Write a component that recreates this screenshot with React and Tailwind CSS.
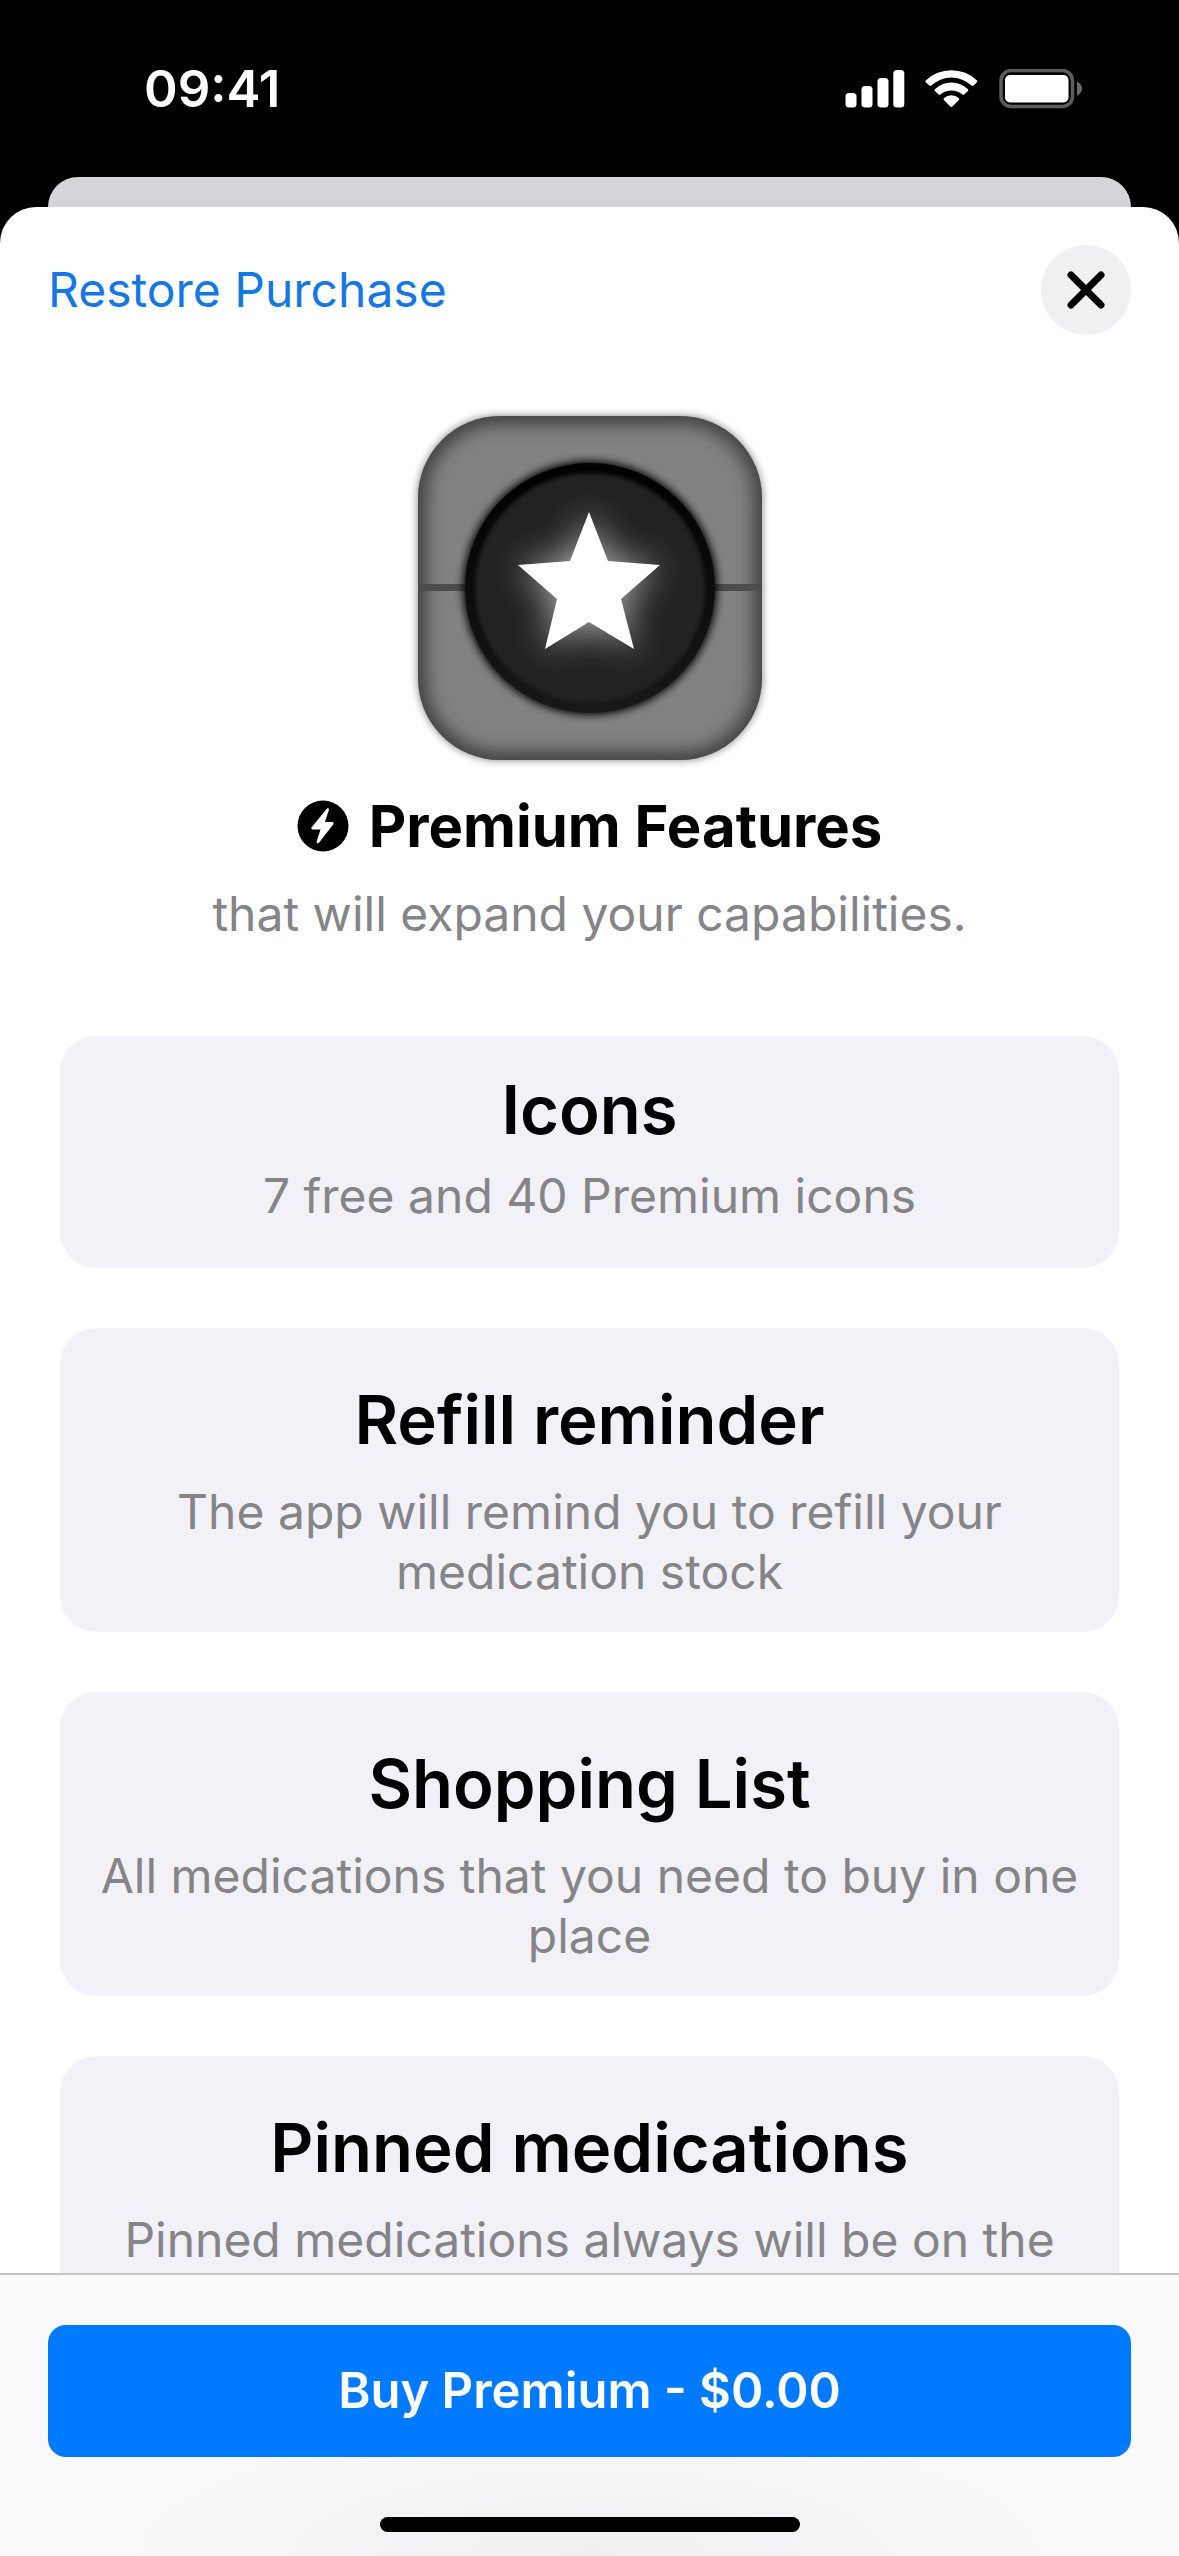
import React from 'react';
import clsx from 'clsx';

const features = [
  { title: 'Icons', text: '7 free and 40 Premium icons', compact: true },
  { title: 'Refill reminder', text: 'The app will remind you to refill your medication stock' },
  { title: 'Shopping List', text: 'All medications that you need to buy in one place' },
  { title: 'Pinned medications', text: 'Pinned medications always will be on the' },
];

function StatusBar() {
  return (
    <div className="flex h-[177px] shrink-0 items-center justify-between pl-36 pr-24">
      <span className="text-[51px] leading-[60px] font-semibold text-white">09:41</span>
      <svg width="238" height="40" viewBox="845 68 238 40" fill="#fff" aria-hidden="true">
        {/* Signal */}
        <rect x="845.5" y="92" width="11" height="14.5" rx="3.5" />
        <rect x="861.5" y="85" width="11" height="21.5" rx="3.5" />
        <rect x="877.5" y="77" width="11" height="29.5" rx="3.5" />
        <rect x="893.3" y="69" width="11" height="37.5" rx="3.5" />
        {/* Wifi */}
        <path d="M925.8 79.4 Q925 80.3 925.8 81.2 L929.4 84.6 Q930.3 85.4 931.2 84.6 A29.5 29.5 0 0 1 971.6 84.6 Q972.5 85.4 973.4 84.6 L977 81.2 Q977.8 80.3 977 79.4 A37.3 37.3 0 0 0 925.8 79.4Z" />
        <path d="M934.8 88.2 Q934 89.1 934.8 90 L938.6 93.6 Q939.5 94.4 940.4 93.6 A16.5 16.5 0 0 1 962.4 93.6 Q963.3 94.4 964.2 93.6 L968 90 Q968.8 89.1 968 88.2 A24.2 24.2 0 0 0 934.8 88.2Z" />
        <path d="M943.8 97.2 Q943 98.1 943.9 99 L950.4 105.6 Q951.4 106.6 952.4 105.6 L958.9 99 Q959.8 98.1 959 97.2 A11.5 11.5 0 0 0 943.8 97.2Z" />
        {/* Battery */}
        <rect x="1001" y="69.5" width="71.5" height="36" rx="10" fill="none" stroke="#5c5c5c" strokeWidth="3.5" />
        <rect x="1005" y="74" width="63.5" height="27.5" rx="5" />
        <path d="M1077 80.5 Q1082 83 1082 87.5 T1077 94.5Z" fill="#6a6a6a" />
      </svg>
    </div>
  );
}

function AppIcon() {
  return (
    <svg className="mx-auto mt-[51px]" width="404" height="404" viewBox="-30 -30 404 404" role="img" aria-label="App icon">
      <defs>
        <clipPath id="tile">
          <rect width="344" height="344" rx="82" />
        </clipPath>
        <filter id="soft" x="-20%" y="-20%" width="140%" height="140%">
          <feGaussianBlur stdDeviation="4" />
        </filter>
        <filter id="edge" x="-20%" y="-20%" width="140%" height="140%">
          <feGaussianBlur stdDeviation="9" />
        </filter>
        <filter id="rimblur" x="-20%" y="-20%" width="140%" height="140%">
          <feGaussianBlur stdDeviation="2" />
        </filter>
        <filter id="glow" x="-60%" y="-60%" width="220%" height="220%">
          <feGaussianBlur stdDeviation="18" />
        </filter>
        <linearGradient id="rim" x1="0" y1="0" x2="0" y2="1">
          <stop offset="0" stopColor="#000" />
          <stop offset="1" stopColor="#181818" />
        </linearGradient>
        <clipPath id="dial">
          <circle cx="172" cy="172" r="124" />
        </clipPath>
      </defs>
      <rect width="344" height="344" rx="82" fill="#000" opacity="0.5" filter="url(#soft)" />
      <g clipPath="url(#tile)">
        <rect width="344" height="344" fill="#828282" />
        <rect x="-4" y="-4" width="352" height="352" rx="86" fill="none" stroke="#3c3c3c" strokeWidth="24" filter="url(#edge)" />
        <rect y="168" width="344" height="7" fill="#4c4c4c" />
      </g>
      <circle cx="172" cy="172" r="127" fill="#000" filter="url(#soft)" />
      <circle cx="172" cy="172" r="125" fill="url(#rim)" />
      <circle cx="172" cy="172" r="115" fill="#212121" filter="url(#rimblur)" />
      <g clipPath="url(#dial)">
        <path d="M171 96 190 145 242 149 203 183 216 233 171 206 127 233 139 183 100 149 152 145Z" fill="#fff" opacity="0.65" filter="url(#glow)" />
      </g>
      <path d="M171 96 190 145 242 149 203 183 216 233 171 206 127 233 139 183 100 149 152 145Z" fill="#fff" />
    </svg>
  );
}

function FeatureCard({ title, text, compact }) {
  return (
    <li
      className={clsx(
        'flex flex-col rounded-[36px] bg-[#f2f1f7] px-9 text-center',
        compact ? 'gap-3.5 pt-8 pb-[42px]' : 'min-h-[304px] gap-5 pt-[50px] pb-[30px]'
      )}
    >
      <h2 className="text-[67px] leading-[84px] font-semibold text-black">{title}</h2>
      <p className="text-[48px] leading-[60px] text-[#858489]">{text}</p>
    </li>
  );
}

export default function App() {
  return (
    <div className="flex h-screen flex-col overflow-hidden bg-black font-['Inter',sans-serif]">
      <StatusBar />

      {/* Sheet underneath */}
      <div className="mx-12 h-[30px] shrink-0 rounded-t-[30px] bg-[#d5d4d9]" />

      <div className="flex min-h-0 flex-1 flex-col rounded-t-[36px] bg-white">
        <header className="flex shrink-0 items-center justify-between px-12 pt-[38px]">
          <button type="button" className="text-[48px] leading-[60px] text-[#1477e4]">
            Restore Purchase
          </button>
          <button type="button" aria-label="Close" className="flex size-[90px] items-center justify-center rounded-full bg-[#f0f0f2]">
            <svg width="38" height="38" viewBox="0 0 38 38" stroke="#000" strokeWidth="7" strokeLinecap="round">
              <path d="M4 4 34 34M34 4 4 34" />
            </svg>
          </button>
        </header>

        <main className="min-h-0 flex-1 overflow-y-auto [scrollbar-width:none]">
          <AppIcon />
          <div className="flex items-center justify-center gap-5">
            <svg width="52" height="52" viewBox="0 0 52 52" aria-hidden="true">
              <circle cx="26" cy="26" r="25.5" />
              <path d="M30 8.5 14.5 27.5Q13.8 29.5 15.5 29.5H23.5L19.5 42Q20 44 21.8 43L36.5 24Q37.2 22 35.5 22H28L32 9.5Q31.8 7.5 30 8.5Z" fill="#fff" />
            </svg>
            <h1 className="text-[58px] leading-[72px] font-bold text-black">Premium Features</h1>
          </div>
          <p className="mt-[22px] text-center text-[48px] leading-[60px] text-[#858489]">
            that will expand your capabilities.
          </p>

          <ul className="mx-15 mt-23 flex flex-col gap-15">
            {features.map((f) => (
              <FeatureCard key={f.title} {...f} />
            ))}
          </ul>
        </main>

        <footer className="flex shrink-0 flex-col items-center gap-15 border-t-2 border-[#c4c4c6] bg-[#fafafc] bg-[radial-gradient(ellipse_45%_55%_at_50%_100%,#efeff0,#fafafc)] px-12 pt-[50px] pb-6">
          <button type="button" className="h-[132px] w-full rounded-[18px] bg-[#007aff] text-[49px] leading-[60px] font-semibold text-white">
            Buy Premium - $0.00
          </button>
          <div className="h-[15px] w-[420px] rounded-full bg-black" />
        </footer>
      </div>
    </div>
  );
}
